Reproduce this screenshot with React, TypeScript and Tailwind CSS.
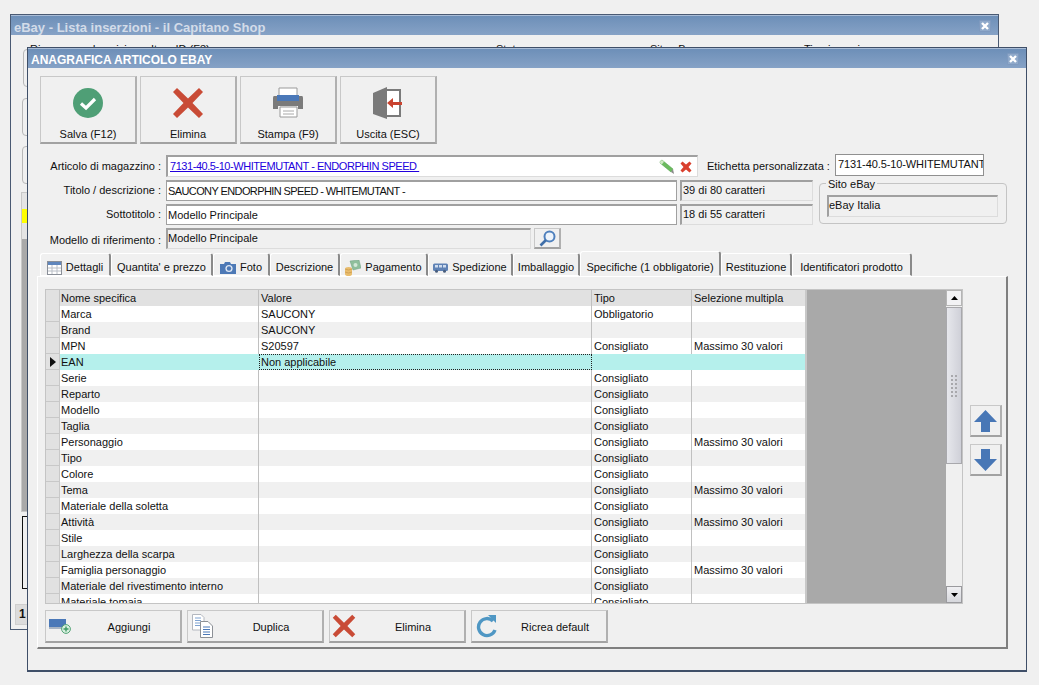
import React from "react";

const F = "font-['Liberation_Sans','Noto_Sans',sans-serif]";

function CloseBtn() {
  return (
    <div className="w-[12px] h-[12px] rounded-[1px] bg-[#8fa9ca] border border-[#7f9abf] flex items-center justify-center">
      <svg width="10" height="10" viewBox="0 0 10 10"><path d="M2 2L8 8M8 2L2 8" stroke="#fff" strokeWidth="2.4" /></svg>
    </div>
  );
}

function TitleBar({ title, dim }: { title: string; dim?: boolean }) {
  return (
    <div className="h-[20px] shrink-0 border-t border-t-[#a9bcd6] bg-gradient-to-b from-[#6d8fb8] to-[#86a2c6] flex items-center justify-between pl-[3px] pr-[7px]">
      <span className={dim ? "pt-[4px] text-[13px] font-bold text-[#d3dce9]" : "pt-[3px] text-[12px] font-bold text-white"}>{title}</span>
      <CloseBtn />
    </div>
  );
}

function IconCheck() {
  return (
    <svg width="32" height="32" viewBox="0 0 32 32">
      <circle cx="16" cy="16" r="15" fill="#4f9f76" />
      <path d="M9 16.5L14 21L23 12" fill="none" stroke="#fff" strokeWidth="3.2" />
    </svg>
  );
}

function IconX({ size = 32 }: { size?: number }) {
  return (
    <svg width={size} height={size} viewBox="0 0 32 32">
      <path d="M5 1L16 11.5L27 1L31 5L20.5 16L31 27L27 31L16 20.5L5 31L1 27L11.5 16L1 5Z" fill="#c94b36" />
    </svg>
  );
}

function IconXSmall() {
  return (
    <svg width="12" height="12" viewBox="0 0 12 12">
      <path d="M2.5 0.5L6 3.5L9.5 0.5L11.5 2.5L8.5 6L11.5 9.5L9.5 11.5L6 8.5L2.5 11.5L0.5 9.5L3.5 6L0.5 2.5Z" fill="#d9402e" />
    </svg>
  );
}

function IconPrinter() {
  return (
    <svg width="32" height="32" viewBox="0 0 32 32">
      <path d="M7 1H25V9H7Z" fill="#fff" stroke="#9a9a9a" />
      <path d="M2 9H30Q31 9 31 11V22H26V19H6V22H1V11Q1 9 2 9Z" fill="#7b7b7b" />
      <path d="M5 8H27V14H5Z" fill="#4a78b8" />
      <path d="M8 20H25V30H8Z" fill="#fff" stroke="#9a9a9a" />
      <path d="M11 24H22M11 27H22" stroke="#a8a8a8" />
    </svg>
  );
}

function IconExit() {
  return (
    <svg width="32" height="32" viewBox="0 0 32 32">
      <path d="M14 3H28V29H14Z" fill="#fff" stroke="#7a7a7a" strokeWidth="2" />
      <path d="M1 6L15 0V32L1 27Z" fill="#7a7a7a" />
      <path d="M30 15H21V11L15 16L21 21V18H30Z" fill="#c9432f" />
    </svg>
  );
}

function IconTable() {
  return (
    <svg width="15" height="14" viewBox="0 0 15 14" className="shrink-0">
      <rect x="0.5" y="0.5" width="14" height="13" fill="#fff" stroke="#8a8f98" />
      <rect x="1" y="1" width="13" height="3" fill="#5f86bd" />
      <path d="M1 7H14M1 10H14M5 4V13M10 4V13" stroke="#b9bec6" />
    </svg>
  );
}

function IconCamera() {
  return (
    <svg width="16" height="13" viewBox="0 0 16 13" className="shrink-0">
      <path d="M0 3H4L5 1H10L11 3H16V13H0Z" fill="#4d79b6" />
      <circle cx="9" cy="7.5" r="3.6" fill="#dfe8f4" />
      <circle cx="9" cy="7.5" r="2.2" fill="#4d79b6" />
    </svg>
  );
}

function IconCoins() {
  return (
    <svg width="16" height="16" viewBox="0 0 16 16" className="shrink-0">
      <path d="M5 1L14 0L16 8L8 10Z" fill="#8fbf9c" stroke="#6f9f80" strokeWidth="0.5" />
      <circle cx="10.5" cy="5" r="2" fill="#d3e8d8" />
      <path d="M0 9Q0 7 3.5 7Q7 7 7 9V14Q7 16 3.5 16Q0 16 0 14Z" fill="#e9bd6d" />
      <path d="M0 9Q3.5 11 7 9M0 12Q3.5 14 7 12" stroke="#c8974a" fill="none" strokeWidth="0.7" />
    </svg>
  );
}

function IconTruck() {
  return (
    <svg width="15" height="10" viewBox="0 0 15 10" className="shrink-0">
      <rect x="0" y="0.5" width="15" height="7.5" rx="1.5" fill="#5f82b5" />
      <path d="M2 2H5V4.5H2ZM6 2H9V4.5H6ZM10 2H13V4.5H10Z" fill="#cfdcee" />
      <circle cx="3.5" cy="8.3" r="1.5" fill="#485d7c" />
      <circle cx="11.5" cy="8.3" r="1.5" fill="#485d7c" />
    </svg>
  );
}

function IconPencil() {
  return (
    <svg width="15" height="15" viewBox="0 0 15 15">
      <path d="M3 1L14 10L12 13L1 4Q0.5 2 3 1Z" fill="#6bbb5e" stroke="#4b9a45" strokeWidth="0.5" />
      <path d="M3 1L5 2.8L2.8 5.5L1 4Q0.5 2 3 1Z" fill="#cfe9c4" />
      <path d="M14 10L15 15L12 13Z" fill="#8a8a8a" />
    </svg>
  );
}

function IconSearch() {
  return (
    <svg width="17" height="17" viewBox="0 0 17 17">
      <circle cx="10.5" cy="6.5" r="5" fill="#eef4fb" stroke="#4f80bd" strokeWidth="2" />
      <path d="M7 10L1.5 15.5" stroke="#3f6ea8" strokeWidth="2.6" />
    </svg>
  );
}

function IconAdd() {
  return (
    <svg width="22" height="18" viewBox="0 0 22 18">
      <rect x="0" y="2" width="17" height="9" fill="#4a78b8" />
      <rect x="0" y="10" width="17" height="2" fill="#a8b4c4" />
      <circle cx="17" cy="12" r="4.4" fill="#d8efdf" stroke="#54a476" />
      <path d="M14.5 12H19.5M17 9.5V14.5" stroke="#3f9a66" strokeWidth="1.4" />
    </svg>
  );
}

function IconDup() {
  return (
    <svg width="21" height="24" viewBox="0 0 21 24">
      <path d="M0.5 0.5H9L12 3.5V16H0.5Z" fill="#fff" stroke="#b4b8bf" />
      <path d="M3 4H9M3 6.5H9M3 9H9M3 11.5H9" stroke="#7fa3d1" />
      <path d="M8.5 7.5H16L20.5 12V23.5H8.5Z" fill="#fff" stroke="#8c9096" />
      <path d="M11 13H18M11 15.5H18M11 18H18M11 20.5H18" stroke="#4a78b8" />
    </svg>
  );
}

function IconRefresh() {
  return (
    <svg width="22" height="24" viewBox="0 0 22 24">
      <path d="M18 7A8.5 8.5 0 1 0 20 16" fill="none" stroke="#4f97c4" strokeWidth="3.4" />
      <path d="M13 1L21 1L21 9Z" fill="#4f97c4" />
    </svg>
  );
}

function BigButton({ icon, label }: { icon: React.ReactNode; label: string }) {
  return (
    <button className="w-[97px] h-[68px] shrink-0 bg-[#f0f0f0] border border-[#c8c8c8] border-b-2 border-r-2 border-b-[#a2a2a2] border-r-[#b0b0b0] flex flex-col items-center pt-[10px] text-[11px] text-[#111]">
      {icon}
      <span className="mt-[8px] leading-[14px]">{label}</span>
    </button>
  );
}

function SmallButton({ icon, label }: { icon: React.ReactNode; label: string }) {
  return (
    <button className="w-[137px] h-[33px] shrink-0 bg-[#f0f0f0] border border-[#c8c8c8] border-b-2 border-r-2 border-b-[#a2a2a2] border-r-[#b0b0b0] flex items-center pl-[2px] text-[11px] text-[#111]">
      <span className="w-[24px] flex justify-center">{icon}</span>
      <span className="flex-1 text-center pl-[6px] pt-[2px]">{label}</span>
    </button>
  );
}

function Label({ w, children }: { w: string; children: React.ReactNode }) {
  return <div className={`${w} shrink-0 text-right text-[11px] text-[#111] whitespace-nowrap`}>{children}</div>;
}

const tabs: { label: string; w: string; icon?: React.ReactNode; active?: boolean }[] = [
  { label: "Dettagli", w: "w-[71px]", icon: <IconTable /> },
  { label: "Quantita' e prezzo", w: "w-[102px]" },
  { label: "Foto", w: "w-[57px]", icon: <IconCamera /> },
  { label: "Descrizione", w: "w-[70px]" },
  { label: "Pagamento", w: "w-[88px]", icon: <IconCoins /> },
  { label: "Spedizione", w: "w-[85px]", icon: <IconTruck /> },
  { label: "Imballaggio", w: "w-[67px]" },
  { label: "Specifiche (1 obbligatorie)", w: "w-[141px]", active: true },
  { label: "Restituzione", w: "w-[71px]" },
  { label: "Identificatori prodotto", w: "w-[120px]" },
];

const rows: [string, string, string, string][] = [
  ["Marca", "SAUCONY", "Obbligatorio", ""],
  ["Brand", "SAUCONY", "", ""],
  ["MPN", "S20597", "Consigliato", "Massimo 30 valori"],
  ["EAN", "Non applicabile", "", ""],
  ["Serie", "", "Consigliato", ""],
  ["Reparto", "", "Consigliato", ""],
  ["Modello", "", "Consigliato", ""],
  ["Taglia", "", "Consigliato", ""],
  ["Personaggio", "", "Consigliato", "Massimo 30 valori"],
  ["Tipo", "", "Consigliato", ""],
  ["Colore", "", "Consigliato", ""],
  ["Tema", "", "Consigliato", "Massimo 30 valori"],
  ["Materiale della soletta", "", "Consigliato", ""],
  ["Attività", "", "Consigliato", "Massimo 30 valori"],
  ["Stile", "", "Consigliato", ""],
  ["Larghezza della scarpa", "", "Consigliato", ""],
  ["Famiglia personaggio", "", "Consigliato", "Massimo 30 valori"],
  ["Materiale del rivestimento interno", "", "Consigliato", ""],
  ["Materiale tomaia", "", "Consigliato", ""],
];

function Table() {
  return (
    <div className="w-[918px] h-[315px] border border-[#c4c4c4] flex overflow-hidden text-[11px] text-[#111]">
      <div className="w-[759px] shrink-0 flex flex-col">
        <div className="h-[16px] shrink-0 flex bg-[#e1e1e1] leading-[16px]">
          <div className="w-[14px] shrink-0 border-r border-[#c4c4c4]" />
          <div className="w-[199px] shrink-0 pl-[1px] border-r border-[#c0c0c0]">Nome specifica</div>
          <div className="w-[333px] shrink-0 pl-[2px] border-r border-[#c0c0c0]">Valore</div>
          <div className="w-[100px] shrink-0 pl-[2px] border-r border-[#c0c0c0]">Tipo</div>
          <div className="flex-1 pl-[2px]">Selezione multipla</div>
        </div>
        {rows.map((r, i) => {
          const sel = r[0] === "EAN";
          const bg = sel ? "bg-[#b5f0ec]" : i % 2 === 0 ? "bg-white" : "bg-[#f0f0f0]";
          return (
            <div key={r[0]} className="h-[16px] shrink-0 flex leading-[16px]">
              <div className="w-[14px] shrink-0 bg-[#e1e1e1] border-r border-b border-[#c8c8c8] flex items-center justify-center">
                {sel && <svg width="6" height="10" viewBox="0 0 6 10"><path d="M0 0L6 5L0 10Z" fill="#111" /></svg>}
              </div>
              <div className={`w-[199px] shrink-0 pl-[1px] border-r ${sel ? "border-[#b5f0ec]" : "border-[#c0c0c0]"} ${bg}`}>{r[0]}</div>
              {sel ? (
                <div className={`w-[333px] shrink-0 pl-[1px] border border-dotted border-[#222] leading-[14px] ${bg}`}>{r[1]}</div>
              ) : (
                <div className={`w-[333px] shrink-0 pl-[2px] border-r border-[#c0c0c0] ${bg}`}>{r[1]}</div>
              )}
              <div className={`w-[100px] shrink-0 pl-[2px] border-r ${sel ? "border-[#b5f0ec]" : "border-[#c0c0c0]"} ${bg}`}>{r[2]}</div>
              <div className={`flex-1 pl-[2px] ${bg}`}>{r[3]}</div>
            </div>
          );
        })}
      </div>
      <div className="w-[2px] shrink-0 bg-[#c8c8c8]" />
      <div className="flex-1 bg-[#a9a9a9]" />
      <div className="w-[16px] shrink-0 bg-[#f0f0f0] flex flex-col">
        <div className="h-[16px] shrink-0 bg-[#f2f2f4] border border-[#b5b5b5] flex items-center justify-center">
          <svg width="7" height="4" viewBox="0 0 7 4"><path d="M3.5 0L7 4H0Z" fill="#000" /></svg>
        </div>
        <div className="h-[157px] shrink-0 mt-[1px] bg-gradient-to-r from-[#e6e7ec] to-[#cfd0d8] border border-[#a8a8ac] flex items-center justify-center">
          <div className="grid grid-cols-2 gap-x-[2px] gap-y-[2px]">
            {Array.from({ length: 12 }).map((_, i) => (
              <div key={i} className="w-[2px] h-[2px] bg-[#a8a8ac]" />
            ))}
          </div>
        </div>
        <div className="flex-1" />
        <div className="h-[17px] shrink-0 bg-gradient-to-b from-[#f0f0f3] to-[#d6d7dc] border border-[#9a9a9e] flex items-center justify-center">
          <svg width="7" height="4" viewBox="0 0 7 4"><path d="M0 0H7L3.5 4Z" fill="#000" /></svg>
        </div>
      </div>
    </div>
  );
}

function ArrowBtn({ up }: { up?: boolean }) {
  return (
    <button className="w-[32px] h-[32px] bg-[#f0f0f0] border border-[#c8c8c8] border-b-2 border-r-2 border-b-[#a2a2a2] border-r-[#b0b0b0] flex items-center justify-center">
      <svg width="23" height="22" viewBox="0 0 23 22">
        {up ? <path d="M11.5 0L23 12H16V22H7V12H0Z" fill="#4877b6" /> : <path d="M11.5 22L23 10H16V0H7V10H0Z" fill="#4877b6" />}
      </svg>
    </button>
  );
}

const sunken = "border-2 border-[#a0a0a0] border-b-[#dcdcdc] border-r-[#dcdcdc] border-b border-r";

function BackWindow() {
  return (
    <div className="absolute left-[10px] top-[14px] w-[989px] h-[616px] border border-[#4a5a73] bg-[#f0f0f0] overflow-hidden flex flex-col">
      <TitleBar title="eBay - Lista inserzioni - il Capitano Shop" dim />
      <div className="h-[14px] shrink-0 flex text-[11px] text-[#111] pl-[19px] pt-[7px] leading-[14px] whitespace-nowrap">
        <span className="w-[121px]">Ricerca per descrizione</span>
        <span className="w-[345px]">Item ID (F3)</span>
        <span className="w-[154px]">Stato</span>
        <span className="w-[154px]">Sito eBay</span>
        <span>Tipo inserzione</span>
      </div>
      <div className="flex flex-col pl-[11px]">
        <div className="h-[38px] w-[30px] border border-[#b8b8b8] rounded-[4px] ml-[1px]" />
        <div className="h-[38px] w-[30px] border border-[#b8b8b8] rounded-[4px] mt-[11px]" />
        <div className="h-[38px] w-[30px] border border-[#b8b8b8] rounded-[4px] mt-[10px] flex items-center"><div className="w-[3px] h-[14px] ml-[5px] bg-[#3a5a8c]" /></div>
        <div className="h-[320px] w-[30px] mt-[8px] border border-[#c8c8c8] flex flex-col ml-[-1px]">
          <div className="h-[16px] bg-[#e4e4e4]" />
          <div className="h-[14px] bg-[#ffff00]" />
          <div className="h-[16px] bg-[#e4e4e4]" />
          <div className="flex-1 bg-[#a9a9a9]" />
        </div>
        <div className="h-[73px] w-[30px] mt-[4px] border border-[#111] bg-[#f0f0f0]" />
        <div className="h-[21px] w-[20px] mt-[15px] ml-[-7px] bg-[#dcdcdc] border border-[#cfcfcf] text-[12px] font-bold text-[#111] pl-[3px] leading-[19px]">1</div>
      </div>
    </div>
  );
}

function FrontWindow() {
  return (
    <div className="absolute left-[27px] top-[47px] w-[1000px] h-[625px] border border-[#3f4f68] border-b-2 bg-[#f0f0f0] flex flex-col">
      <TitleBar title="ANAGRAFICA ARTICOLO EBAY" />
      <div className="flex-1 pl-[9px] pr-[19px] flex flex-col">
        <div className="flex gap-[3px] pl-[3px] mt-[8px]">
          <BigButton icon={<IconCheck />} label="Salva (F12)" />
          <BigButton icon={<IconX />} label="Elimina" />
          <BigButton icon={<IconPrinter />} label="Stampa (F9)" />
          <BigButton icon={<IconExit />} label="Uscita (ESC)" />
        </div>

        <div className="flex items-center mt-[11px] h-[22px]">
          <Label w="w-[124px]">Articolo di magazzino :</Label>
          <div className={`ml-[5px] w-[532px] h-[22px] bg-white ${sunken} flex items-center pl-[2px] pr-[5px]`}>
            <span className="text-[11px] text-[#2200dd] underline flex-1 whitespace-pre tracking-[-0.45px]">7131-40.5-10-WHITEMUTANT - ENDORPHIN SPEED </span>
            <IconPencil />
            <span className="ml-[6px] flex"><IconXSmall /></span>
          </div>
          <div className="ml-[9px] w-[124px] shrink-0 text-[11px] text-[#111] whitespace-nowrap">Etichetta personalizzata :</div>
          <div className="ml-[4px] w-[149px] h-[22px] bg-white border border-[#909090] text-[11px] text-[#111] pl-[2px] leading-[19px] whitespace-nowrap overflow-hidden -mt-[2px] tracking-[-0.1px]">7131-40.5-10-WHITEMUTANT</div>
        </div>

        <div className="flex mt-[3px]">
          <div className="flex flex-col gap-[3px] w-[776px] shrink-0">
            <div className="flex items-center h-[21px]">
              <Label w="w-[124px]">Titolo / descrizione :</Label>
              <div className="ml-[5px] w-[511px] h-[21px] bg-white border border-[#a0a0a0] border-t-2 pl-[1px] text-[11px] text-[#111] leading-[18px] tracking-[-0.6px]">SAUCONY ENDORPHIN SPEED - WHITEMUTANT -</div>
              <div className={`ml-[3px] w-[133px] h-[21px] ${sunken} text-[11px] text-[#111] pl-[1px] leading-[16px]`}>39 di 80 caratteri</div>
            </div>
            <div className="flex items-center h-[21px]">
              <Label w="w-[124px]">Sottotitolo :</Label>
              <div className="ml-[5px] w-[511px] h-[21px] bg-white border border-[#a0a0a0] border-t-2 pl-[1px] text-[11px] text-[#111] leading-[18px]">Modello Principale</div>
              <div className={`ml-[3px] w-[133px] h-[21px] ${sunken} text-[11px] text-[#111] pl-[1px] leading-[16px]`}>18 di 55 caratteri</div>
            </div>
          </div>
          <div className="relative ml-[6px] mt-[3px] w-[189px] h-[41px] border border-[#c4c4c4] rounded-[4px] px-[7px] pt-[11px]">
            <span className="absolute left-[6px] -top-[6px] px-[2px] bg-[#f0f0f0] text-[11px] leading-[13px] text-[#111]">Sito eBay</span>
            <div className={`w-[171px] h-[22px] ${sunken} text-[11px] text-[#111] leading-[16px]`}>eBay Italia</div>
          </div>
        </div>

        <div className="flex items-center mt-[3px] h-[21px]">
          <div className="pt-[3px]"><Label w="w-[124px]">Modello di riferimento :</Label></div>
          <div className={`ml-[5px] w-[365px] h-[21px] ${sunken} text-[11px] text-[#111] leading-[16px]`}>Modello Principale</div>
          <div className="ml-[3px] w-[27px] h-[21px] bg-[#f0f0f0] border border-[#c8c8c8] border-b-2 border-r-2 border-b-[#a2a2a2] border-r-[#b0b0b0] flex items-center justify-center"><IconSearch /></div>
        </div>

        <div className="flex items-end h-[25px] mt-[2px] pl-[3px] text-[11px] text-[#111]">
          {tabs.map((t) => (
            <div
              key={t.label}
              className={
                t.active
                  ? `${t.w} shrink-0 h-[25px] bg-[#f0f0f0] border border-white border-r-2 border-r-[#8a8a8a] border-b-[#f0f0f0] rounded-t-[3px] flex items-center justify-center gap-[4px] whitespace-nowrap pt-[8px]`
                  : `${t.w} shrink-0 h-[23px] bg-[#f0f0f0] border border-white border-r-2 border-r-[#8a8a8a] border-b-white rounded-t-[3px] flex items-center justify-center gap-[4px] whitespace-nowrap pt-[6px]`
              }
            >
              {t.icon}
              <span>{t.label}</span>
            </div>
          ))}
        </div>

        <div className="w-[971px] h-[373px] bg-[#f0f0f0] border border-white border-r-2 border-b-2 border-r-[#7f7f7f] border-b-[#7f7f7f] pl-[7px] pt-[12px]">
          <div className="flex">
            <Table />
            <div className="flex flex-col gap-[7px] ml-[7px] pt-[116px]">
              <ArrowBtn up />
              <ArrowBtn />
            </div>
          </div>
          <div className="flex gap-[5px] mt-[6px]">
            <SmallButton icon={<IconAdd />} label="Aggiungi" />
            <SmallButton icon={<IconDup />} label="Duplica" />
            <SmallButton icon={<IconX size={24} />} label="Elimina" />
            <SmallButton icon={<IconRefresh />} label="Ricrea default" />
          </div>
        </div>
      </div>
    </div>
  );
}

export default function App() {
  return (
    <div className={`relative w-[1039px] h-[685px] overflow-hidden bg-[#f0f0f0] ${F}`}>
      <BackWindow />
      <FrontWindow />
    </div>
  );
}
